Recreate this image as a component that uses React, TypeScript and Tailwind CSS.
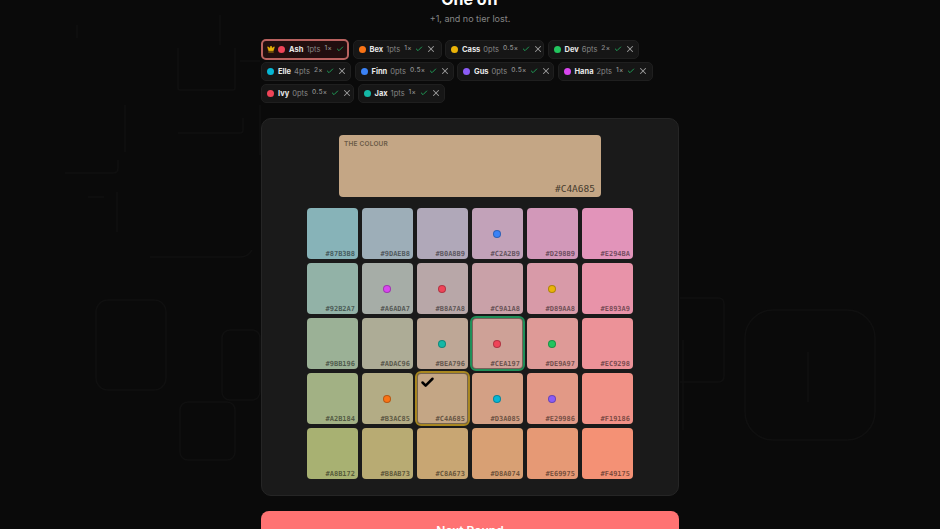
import { Check, Crown, X } from "lucide-react";

type Player = {
  name: string;
  color: string;
  pts: number;
  mult: string;
  w: string;
  leader?: boolean;
};

const rowOne: Player[] = [
  { name: "Ash", color: "bg-[#ef4458]", pts: 1, mult: "1×", w: "w-[88px]", leader: true },
  { name: "Bex", color: "bg-[#f97316]", pts: 1, mult: "1×", w: "w-[89px]" },
  { name: "Cass", color: "bg-[#eab308]", pts: 0, mult: "0.5×", w: "w-[99px]" },
  { name: "Dev", color: "bg-[#22c55e]", pts: 6, mult: "2×", w: "w-[91px]" },
];
const rowTwo: Player[] = [
  { name: "Elle", color: "bg-[#06b6d4]", pts: 4, mult: "2×", w: "w-[90px]" },
  { name: "Finn", color: "bg-[#3b82f6]", pts: 0, mult: "0.5×", w: "w-[99px]" },
  { name: "Gus", color: "bg-[#8b5cf6]", pts: 0, mult: "0.5×", w: "w-[97px]" },
  { name: "Hana", color: "bg-[#d946ef]", pts: 2, mult: "1×", w: "w-[95px]" },
];
const rowThree: Player[] = [
  { name: "Ivy", color: "bg-[#ef4458]", pts: 0, mult: "0.5×", w: "w-[93px]" },
  { name: "Jax", color: "bg-[#14b8a6]", pts: 1, mult: "1×", w: "w-[87px]" },
];

type Cell = { hex: string; bg: string; dot?: string; ring?: string; tick?: boolean };

const cells: Cell[] = [
  { hex: "#87B3B8", bg: "bg-[#87B3B8]" },
  { hex: "#9DAEB8", bg: "bg-[#9DAEB8]" },
  { hex: "#B0A8B9", bg: "bg-[#B0A8B9]" },
  { hex: "#C2A2B9", bg: "bg-[#C2A2B9]", dot: "bg-[#3b82f6]" },
  { hex: "#D298B9", bg: "bg-[#D298B9]" },
  { hex: "#E294BA", bg: "bg-[#E294BA]" },
  { hex: "#92B2A7", bg: "bg-[#92B2A7]" },
  { hex: "#A6ADA7", bg: "bg-[#A6ADA7]", dot: "bg-[#d946ef]" },
  { hex: "#B8A7A8", bg: "bg-[#B8A7A8]", dot: "bg-[#ef4458]" },
  { hex: "#C9A1A8", bg: "bg-[#C9A1A8]" },
  { hex: "#D89AA8", bg: "bg-[#D89AA8]", dot: "bg-[#eab308]" },
  { hex: "#E893A9", bg: "bg-[#E893A9]" },
  { hex: "#9BB196", bg: "bg-[#9BB196]" },
  { hex: "#ADAC96", bg: "bg-[#ADAC96]" },
  { hex: "#BEA796", bg: "bg-[#BEA796]", dot: "bg-[#14b8a6]" },
  { hex: "#CEA197", bg: "bg-[#CEA197]", dot: "bg-[#ef4458]", ring: "outline-[#1f8f58]" },
  { hex: "#DE9A97", bg: "bg-[#DE9A97]", dot: "bg-[#22c55e]" },
  { hex: "#EC9298", bg: "bg-[#EC9298]" },
  { hex: "#A2B184", bg: "bg-[#A2B184]" },
  { hex: "#B3AC85", bg: "bg-[#B3AC85]", dot: "bg-[#f97316]" },
  { hex: "#C4A685", bg: "bg-[#C4A685]", ring: "outline-[#a88720]", tick: true },
  { hex: "#D3A085", bg: "bg-[#D3A085]", dot: "bg-[#06b6d4]" },
  { hex: "#E29986", bg: "bg-[#E29986]", dot: "bg-[#8b5cf6]" },
  { hex: "#F19186", bg: "bg-[#F19186]" },
  { hex: "#A8B172", bg: "bg-[#A8B172]" },
  { hex: "#B8AB73", bg: "bg-[#B8AB73]" },
  { hex: "#C8A673", bg: "bg-[#C8A673]" },
  { hex: "#D8A074", bg: "bg-[#D8A074]" },
  { hex: "#E69975", bg: "bg-[#E69975]" },
  { hex: "#F49175", bg: "bg-[#F49175]" },
];

// faint line drawings behind the page
function Doodles() {
  return (
    <svg className="absolute inset-0" width="940" height="529" fill="none" stroke="#101010" strokeWidth="1.5">
      <path d="M77 25v13M220 15v30M178 48v40q0 2 2 2h53q2 0 2-2V48M240 61h20" />
      <path d="M125 105v47M178 133h62q3 0 3-3v-12M260 105v50" />
      <path d="M65 173h48q5 0 5-5v-8M117 192v40M88 197h16M150 257h90q8 0 12-7" />
      <rect x="745" y="310" width="130" height="130" rx="28" />
      <path d="M680 298h38q6 0 6 6v72q0 6-6 6h-38M808 352v50M683 340v90" />
      <rect x="180" y="402" width="55" height="58" rx="8" />
      <rect x="222" y="330" width="38" height="70" rx="8" />
      <rect x="96" y="300" width="70" height="90" rx="12" />
    </svg>
  );
}

function Chip({ p }: { p: Player }) {
  return (
    <div
      className={`flex items-center rounded-[5px] border ${p.w} ${
        p.leader
          ? "h-[21px] border-2 border-[#b9625f] bg-[#210e0f] pl-[4px]"
          : "h-[19px] border-[#1f1f1f] bg-[#161616] pl-[5px]"
      }`}
    >
      {p.leader && <Crown size={8} className="mr-[3px] shrink-0 fill-[#eab308] text-[#eab308]" />}
      <span className={`h-[7px] w-[7px] shrink-0 rounded-full ${p.color}`} />
      <span className="mt-[1px] ml-[4px] text-[7.5px] font-bold text-[#e8e8e8]">{p.name}</span>
      <span className="mt-[1px] ml-[3px] text-[7.5px] text-[#858585]">{p.pts}pts</span>
      <span className="ml-[4px] text-[6.5px] font-medium tracking-[0.3px] text-[#8f8f8f]">{p.mult}</span>
      <Check size={8} strokeWidth={3} className="ml-[3.5px] shrink-0 text-[#1f9a55]" />
      {!p.leader && <X size={10} strokeWidth={2.5} className="ml-[3px] shrink-0 text-[#9a9a9a]" />}
    </div>
  );
}

function Row({ players }: { players: Player[] }) {
  return (
    <div className="flex h-[22px] items-center gap-[3.5px]">
      {players.map((p) => (
        <Chip key={p.name} p={p} />
      ))}
    </div>
  );
}

export default function App() {
  return (
    <div className="relative h-[529px] w-[940px] overflow-hidden bg-[#0a0a0a] font-['Inter',sans-serif]">
      <Doodles />
      <div className="relative mx-auto -mt-[13px] flex w-[418px] flex-col">
        <h1 className="h-[24px] text-center text-[16px] leading-[24px] font-bold text-white">One off</h1>
        <p className="mt-[1px] h-[14px] text-center text-[9px] leading-[14px] text-[#858585]">+1, and no tier lost.</p>
        <div className="mt-[12px] flex flex-col">
          <Row players={rowOne} />
          <Row players={rowTwo} />
          <Row players={rowThree} />
        </div>
        <div className="mt-[14px] flex h-[378px] flex-col items-center rounded-[10px] border border-[#252525] bg-[#1a1a1a] pt-[16px]">
          <div className="relative h-[62px] w-[262px] rounded-[4px] bg-[#C4A685]">
            <span className="absolute top-[4.5px] left-[5px] text-[6.5px] font-semibold tracking-[0.2px] text-[#6a5a45]">
              THE COLOUR
            </span>
            <span className="absolute right-[6px] bottom-[1px] font-['DejaVu_Sans_Mono',monospace] text-[9.5px] text-[#463b2d]">
              #C4A685
            </span>
          </div>
          <div className="mt-[11px] grid w-[326px] grid-cols-6 gap-[4px]">
            {cells.map((c) => (
              <div
                key={c.hex}
                className={`relative h-[51px] rounded-[4px] ${c.bg} ${
                  c.ring ? `outline-2 ${c.ring} shadow-[inset_0_0_0_1px_rgba(0,0,0,0.4)]` : ""
                }`}
              >
                {c.dot && (
                  <span
                    className={`absolute top-[21.5px] left-[21px] h-[8px] w-[8px] rounded-full border border-[#00000040] ${c.dot}`}
                  />
                )}
                {c.tick && <Check size={15} strokeWidth={4} className="absolute top-[2px] left-[3px] text-black" />}
                <span className="absolute right-[3px] bottom-0 font-['DejaVu_Sans_Mono',monospace] text-[7px] font-bold text-[#00000080]">
                  {c.hex}
                </span>
              </div>
            ))}
          </div>
        </div>
        <button className="mt-[15px] h-[44px] rounded-[8px] bg-[#ff7373] pb-[5px] text-[12px] font-semibold text-white">
          Next Round
        </button>
      </div>
    </div>
  );
}
